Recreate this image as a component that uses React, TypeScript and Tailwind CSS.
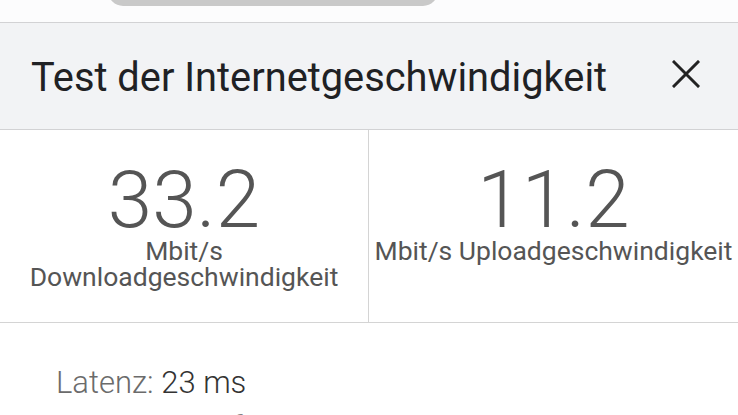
function CloseIcon() {
  return (
    <svg viewBox="0 0 28 28" className="h-[28px] w-[28px]" fill="none" stroke="#222" strokeWidth="3" strokeLinecap="square">
      <path d="M2 2 L26 26 M26 2 L2 26" />
    </svg>
  );
}

function Stat({ value, label, divider }: { value: string; label: string; divider?: boolean }) {
  return (
    <div className={`flex flex-col items-center px-[4px] pt-[32px] text-center text-[#555] ${divider ? "border-r border-[#d4d4d4]" : ""}`}>
      <div className="text-[80px] leading-[76px] font-light">{value}</div>
      <div className="text-[26.5px] leading-[26px]">{label}</div>
    </div>
  );
}

export default function App() {
  return (
    <div className="h-[415px] w-[738px] overflow-hidden bg-[#fcfcfd]" style={{ fontFamily: "Roboto, 'Noto Sans', sans-serif" }}>
      <div className="h-[22px] overflow-hidden">
        <div className="ml-[108px] -mt-[24px] h-[30px] w-[330px] rounded-[20px] bg-[#c9c9c9]" />
      </div>

      <div className="flex h-[108px] items-start justify-between border-y border-[#d2d2d4] bg-[#f2f3f5] pl-[31px] pr-[38px]">
        <h1 className="mt-[31px] text-[39.8px] leading-[48px] text-[#202124]">Test der Internetgeschwindigkeit</h1>
        <div className="mt-[37px]">
          <CloseIcon />
        </div>
      </div>

      <div className="bg-white">
        <div className="grid h-[193px] grid-cols-2 border-b border-[#d4d4d4]">
          <Stat value="33.2" label="Mbit/s Downloadgeschwindigkeit" divider />
          <Stat value="11.2" label="Mbit/s Uploadgeschwindigkeit" />
        </div>

        <div className="pl-[56px] pt-[39px] text-[31px] leading-[42px] font-light">
          <p>
            <span className="text-[#6b6b6b]">Latenz:</span> <span className="text-[#333]">23 ms</span>
          </p>
          <p className="mt-[3px] opacity-60">
            <span className="text-[#6b6b6b]">Server:</span> <span className="text-[#333]">Frankfurt</span>
          </p>
        </div>
      </div>
    </div>
  );
}
